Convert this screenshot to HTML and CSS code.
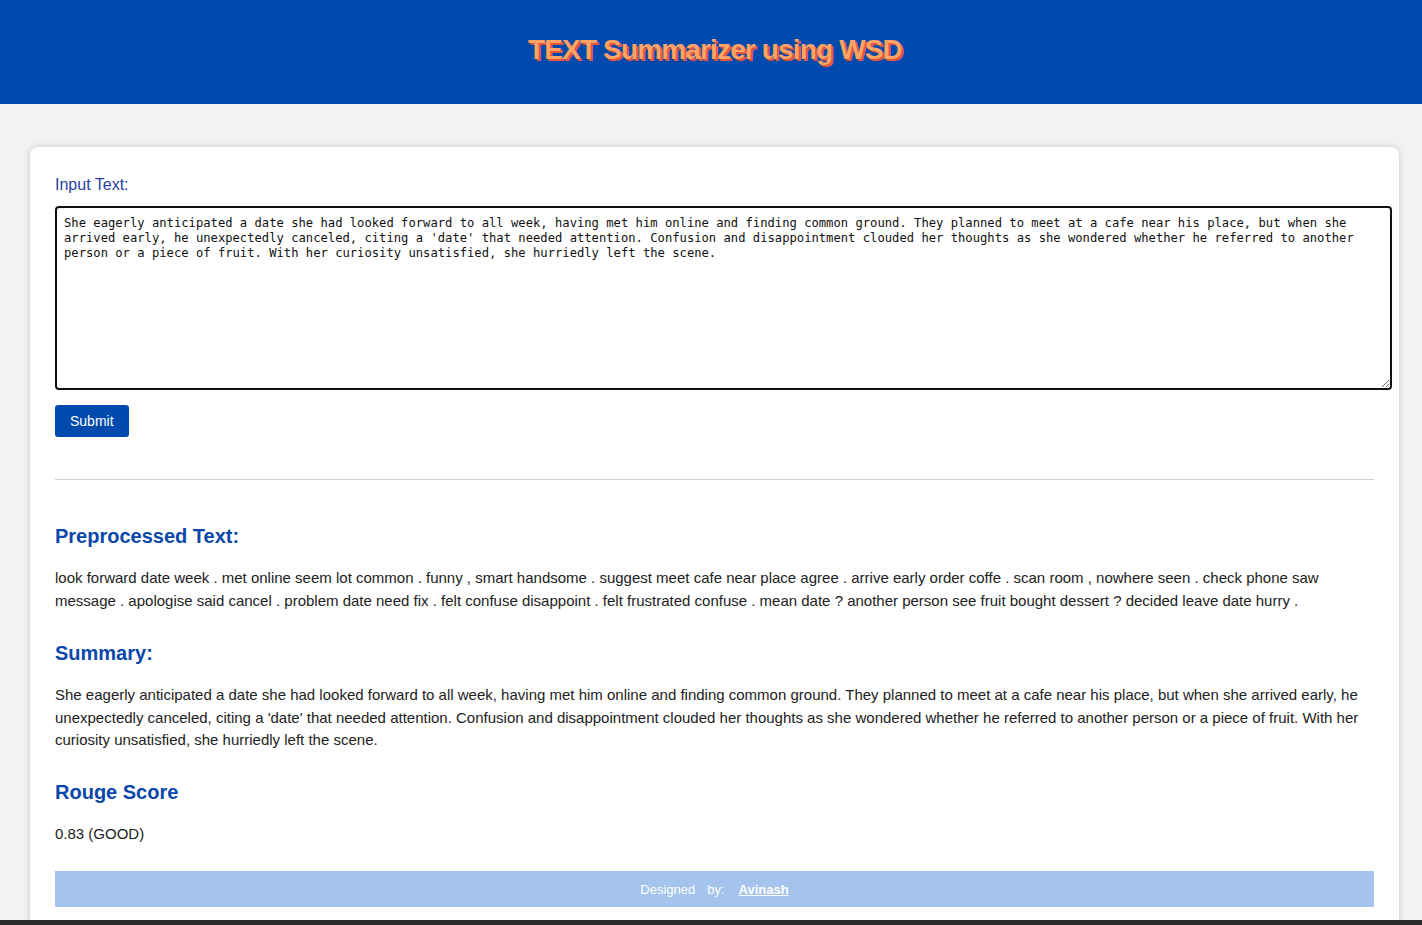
FILE: index.html
```html
<!DOCTYPE html>
<html lang="en">
<head>
<meta charset="utf-8">
<title>TEXT Summarizer using WSD</title>
<link rel="stylesheet" href="styles.css">
</head>
<body>
<header class="site-header">
  <h1 class="site-title">TEXT Summarizer using WSD</h1>
</header>
<main class="page">
  <div class="card">
    <form class="input-form">
      <label class="input-label" for="text">Input Text:</label>
      <textarea id="text" class="input-area" rows="11">She eagerly anticipated a date she had looked forward to all week, having met him online and finding common ground. They planned to meet at a cafe near his place, but when she arrived early, he unexpectedly canceled, citing a 'date' that needed attention. Confusion and disappointment clouded her thoughts as she wondered whether he referred to another person or a piece of fruit. With her curiosity unsatisfied, she hurriedly left the scene.</textarea>
      <button type="button" class="submit-btn">Submit</button>
    </form>
    <hr class="divider">
    <section class="results">
      <h3 class="result-title first">Preprocessed Text:</h3>
      <p class="result-text">look forward date week . met online seem lot common . funny , smart handsome . suggest meet cafe near place agree . arrive early order coffe . scan room , nowhere seen . check phone saw message . apologise said cancel . problem date need fix . felt confuse disappoint . felt frustrated confuse . mean date ? another person see fruit bought dessert ? decided leave date hurry .</p>
      <h3 class="result-title">Summary:</h3>
      <p class="result-text">She eagerly anticipated a date she had looked forward to all week, having met him online and finding common ground. They planned to meet at a cafe near his place, but when she arrived early, he unexpectedly canceled, citing a 'date' that needed attention. Confusion and disappointment clouded her thoughts as she wondered whether he referred to another person or a piece of fruit. With her curiosity unsatisfied, she hurriedly left the scene.</p>
      <h3 class="result-title tight">Rouge Score</h3>
      <p class="result-text">0.83 (GOOD)</p>
    </section>
    <footer class="card-footer">
      <span class="footer-word">Designed</span><span class="footer-word">by:</span><a class="footer-link" href="#">Avinash</a>
    </footer>
  </div>
</main>
<div class="taskbar-edge"></div>
</body>
</html>
```

FILE: styles.css
```css
html, body {
  margin: 0;
  padding: 0;
}
body {
  background: #f2f2f2;
  font-family: "Liberation Sans", Arial, sans-serif;
  color: #222;
}
.site-header {
  background: #004aad;
  height: 104px;
  display: flex;
  align-items: center;
  justify-content: center;
}
.site-title {
  margin: 0 0 4px 8px;
  font-size: 28px;
  font-weight: bold;
  color: #ffa366;
  text-shadow: 2px 2px 0 #e8553a;
  letter-spacing: -0.85px;
}
.page {
  padding: 43px 23px 0 30px;
}
.card {
  background: #fff;
  border-radius: 8px;
  box-shadow: 0 0 6px rgba(0, 0, 0, 0.18);
  padding: 26px 25px 25px 25px;
}
.input-form {
  display: flex;
  flex-direction: column;
  align-items: flex-start;
}
.input-label {
  font-size: 16px;
  line-height: 24px;
  color: #2a3fa0;
  margin-bottom: 9px;
}
.input-area {
  box-sizing: content-box;
  width: 100%;
  padding: 8px 7px 7px 7px;
  border: 2px solid #111;
  border-radius: 4px;
  font-family: "DejaVu Sans Mono", "Liberation Mono", monospace;
  font-size: 12.18px;
  line-height: 15px;
  color: #111;
  resize: both;
  margin: 0;
  height: 165px;
}
.submit-btn {
  margin-top: 15px;
  background: #004aad;
  color: #fff;
  border: none;
  border-radius: 3px;
  font-family: "Liberation Sans", Arial, sans-serif;
  font-size: 14px;
  height: 32px;
  padding: 0 15px;
  cursor: pointer;
}
.divider {
  border: none;
  border-top: 1px solid #d0d0d0;
  margin: 42px 0 0 0;
  height: 0;
}
.result-title {
  font-size: 20px;
  line-height: 23px;
  font-weight: bold;
  color: #0a47ab;
  margin: 30px 0 19px 0;
}
.result-title.first {
  margin-top: 45px;
}
.result-title.tight {
  margin-top: 29px;
}
.result-text {
  margin: 0;
  font-size: 15px;
  line-height: 22.5px;
  color: #222;
}
.card-footer {
  margin-top: 26px;
  background: #a4c3ed;
  height: 36px;
  display: flex;
  align-items: center;
  justify-content: center;
  font-size: 13px;
  color: #fff;
}
.footer-word {
  margin-right: 12px;
}
.footer-link {
  color: #fff;
  font-weight: bold;
  text-decoration: underline;
  margin-left: 2px;
}
.taskbar-edge {
  position: fixed;
  left: 0;
  right: 0;
  bottom: 0;
  height: 5px;
  background: #2b2b2b;
}
```
